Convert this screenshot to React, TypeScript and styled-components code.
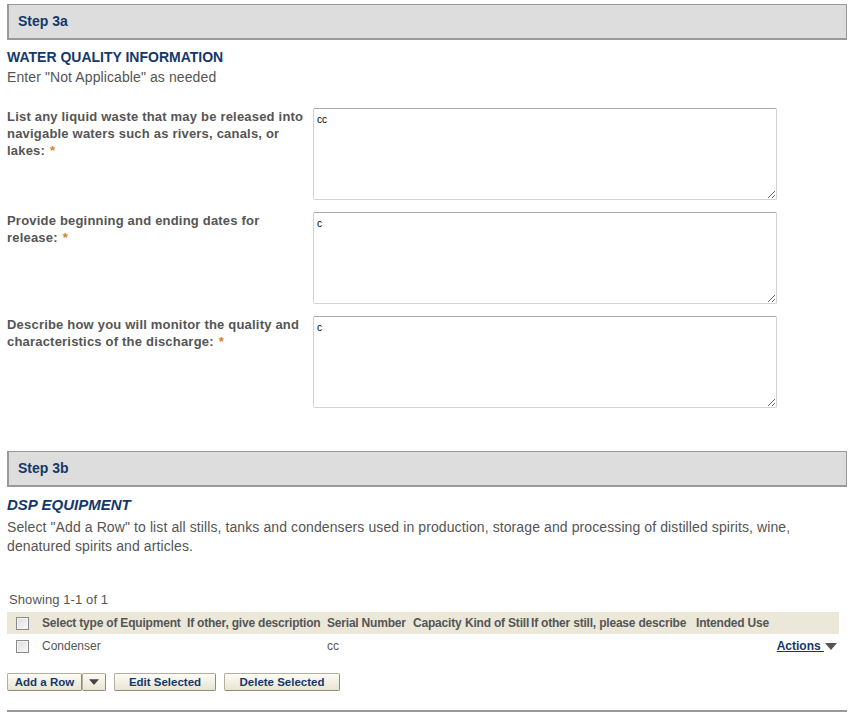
import { createGlobalStyle, styled } from 'styled-components';

const GlobalStyle = createGlobalStyle`
  html, body {
    margin: 0;
    padding: 0;
    background: #fff;
  }
  body {
    font-family: "Liberation Sans", Arial, sans-serif;
  }
`;

const questions = [
  { label: 'List any liquid waste that may be released into navigable waters such as rivers, canals, or lakes:', value: 'cc' },
  { label: 'Provide beginning and ending dates for release:', value: 'c' },
  { label: 'Describe how you will monitor the quality and characteristics of the discharge:', value: 'c' },
];

const columns = [
  { title: 'Select type of Equipment', width: 145 },
  { title: 'If other, give description', width: 140 },
  { title: 'Serial Number', width: 86 },
  { title: 'Capacity', width: 52 },
  { title: 'Kind of Still', width: 66 },
  { title: 'If other still, please describe', width: 165 },
  { title: 'Intended Use', width: 146 },
];

const DownArrow = ({ color = '#555' }: { color?: string }) => (
  <svg width="12" height="8" viewBox="0 0 12 8">
    <path d="M0 0 L12 0 L6 7 Z" fill={color} />
  </svg>
);

const App = () => {
  return (
    <Page>
      <GlobalStyle />
      <StepHeader>Step 3a</StepHeader>
      <SectionTitle>WATER QUALITY INFORMATION</SectionTitle>
      <Hint>Enter "Not Applicable" as needed</Hint>

      <Questions>
        {questions.map((q) => (
          <QuestionRow key={q.label}>
            <QuestionLabel>
              <span>{q.label}</span>
              <Required>*</Required>
            </QuestionLabel>
            <Answer defaultValue={q.value} />
          </QuestionRow>
        ))}
      </Questions>

      <StepHeader>Step 3b</StepHeader>
      <SectionTitle $italic>DSP EQUIPMENT</SectionTitle>
      <Description>
        Select "Add a Row" to list all stills, tanks and condensers used in production, storage and processing of
        distilled spirits, wine, denatured spirits and articles.
      </Description>

      <Showing>Showing 1-1 of 1</Showing>
      <Grid>
        <colgroup>
          <col style={{ width: 32 }} />
          {columns.map((c) => (
            <col key={c.title} style={{ width: c.width }} />
          ))}
        </colgroup>
        <thead>
          <tr>
            <HeadCell>
              <Check type="checkbox" />
            </HeadCell>
            {columns.map((c) => (
              <HeadCell key={c.title}>{c.title}</HeadCell>
            ))}
          </tr>
        </thead>
        <tbody>
          <tr>
            <Cell>
              <Check type="checkbox" />
            </Cell>
            <Cell>Condenser</Cell>
            <Cell></Cell>
            <Cell>cc</Cell>
            <Cell></Cell>
            <Cell></Cell>
            <Cell></Cell>
            <Cell $right>
              <ActionsLink href="#">Actions </ActionsLink>
              <DownArrow />
            </Cell>
          </tr>
        </tbody>
      </Grid>

      <ButtonBar>
        <SplitButton>
          <Button $width={75}>Add a Row</Button>
          <Button $width={24}>
            <DownArrow color="#444" />
          </Button>
        </SplitButton>
        <Button $width={102}>Edit Selected</Button>
        <Button $width={116}>Delete Selected</Button>
      </ButtonBar>
      <Rule />
    </Page>
  );
};

export default App;

const Page = styled.div`
  width: 840px;
  padding: 4px 5px 0 7px;
  color: #555;
`;

const StepHeader = styled.div`
  height: 33px;
  line-height: 33px;
  padding-left: 9px;
  background: #dddddd;
  border: 2px solid #999;
  border-top-width: 1px;
  border-right-width: 1px;
  font-size: 14px;
  font-weight: 700;
  color: #14386b;
`;

const SectionTitle = styled.h2<{ $italic?: boolean }>`
  margin: 9px 0 0;
  font-size: ${(p) => (p.$italic ? '15px' : '14px')};
  line-height: 17px;
  font-weight: 700;
  font-style: ${(p) => (p.$italic ? 'italic' : 'normal')};
  color: #14386b;
`;

const Hint = styled.p`
  margin: 3px 0 0;
  font-size: 14px;
  line-height: 17px;
  letter-spacing: 0.1px;
  color: #555;
`;

const Questions = styled.div`
  display: flex;
  flex-direction: column;
  gap: 12px;
  margin: 22px 0 43px;
`;

const QuestionRow = styled.div`
  display: flex;
  gap: 6px;
`;

const QuestionLabel = styled.label`
  width: 300px;
  font-size: 13px;
  font-weight: 700;
  line-height: 17px;
  letter-spacing: 0.2px;
  color: #555;
`;

const Required = styled.span`
  margin-left: 5px;
  color: #d9802a;
`;

const Answer = styled.textarea`
  width: 464px;
  height: 92px;
  box-sizing: border-box;
  margin: 0;
  padding: 5px 3px;
  border: 1px solid #d2d2d2;
  border-top-color: #aaa;
  border-radius: 2px;
  font-family: "Liberation Sans", Arial, sans-serif;
  font-size: 10px;
  color: #000;
  outline: none;
`;

const Description = styled.p`
  margin: 5px 0 0;
  font-size: 14px;
  line-height: 19px;
  letter-spacing: 0.1px;
  color: #555;
`;

const Showing = styled.div`
  margin: 35px 0 0 2px;
  font-size: 13px;
  line-height: 17px;
  letter-spacing: 0.1px;
  color: #555;
`;

const Grid = styled.table`
  margin-top: 4px;
  width: 832px;
  table-layout: fixed;
  border-collapse: collapse;
`;

const HeadCell = styled.th`
  height: 22px;
  padding: 0 2px 0 3px;
  background: #ebe8da;
  text-align: left;
  font-size: 12px;
  font-weight: 700;
  letter-spacing: -0.2px;
  color: #555;
  white-space: nowrap;
  overflow: visible;
  &:first-child {
    padding-left: 9px;
  }
`;

const Cell = styled.td<{ $right?: boolean }>`
  height: 24px;
  padding: 0 2px 0 3px;
  text-align: ${(p) => (p.$right ? 'right' : 'left')};
  font-size: 12px;
  color: #555;
  white-space: nowrap;
  &:first-child {
    padding-left: 9px;
  }
  svg {
    vertical-align: middle;
    margin-left: 1px;
  }
`;

const Check = styled.input`
  appearance: none;
  width: 13px;
  height: 13px;
  margin: 0;
  vertical-align: middle;
  border: 1px solid #8a8a8a;
  background: linear-gradient(135deg, #dcdcdc, #fbfbfb);
  box-shadow: inset 0 0 0 1px #f4f4f4;
`;

const ActionsLink = styled.a`
  font-size: 12px;
  font-weight: 700;
  color: #14386b;
  text-decoration: underline;
  white-space: pre;
`;

const ButtonBar = styled.div`
  display: flex;
  gap: 8px;
  margin-top: 15px;
`;

const SplitButton = styled.div`
  display: flex;
`;

const Button = styled.button<{ $width: number }>`
  width: ${(p) => p.$width}px;
  height: 18px;
  margin: 0;
  padding: 0;
  display: flex;
  align-items: center;
  justify-content: center;
  border: 1px solid #b4b0a0;
  border-radius: 2px;
  border-right-color: #8d8a7e;
  border-bottom-color: #8d8a7e;
  background: linear-gradient(#fdfcf6, #e8e4d2);
  font-family: "Liberation Sans", Arial, sans-serif;
  font-size: 11.5px;
  font-weight: 700;
  color: #14386b;
  cursor: pointer;
  svg {
    width: 10px;
    height: 7px;
  }
`;

const Rule = styled.hr`
  margin: 19px 0 0;
  border: none;
  border-top: 2px solid #999;
`;
